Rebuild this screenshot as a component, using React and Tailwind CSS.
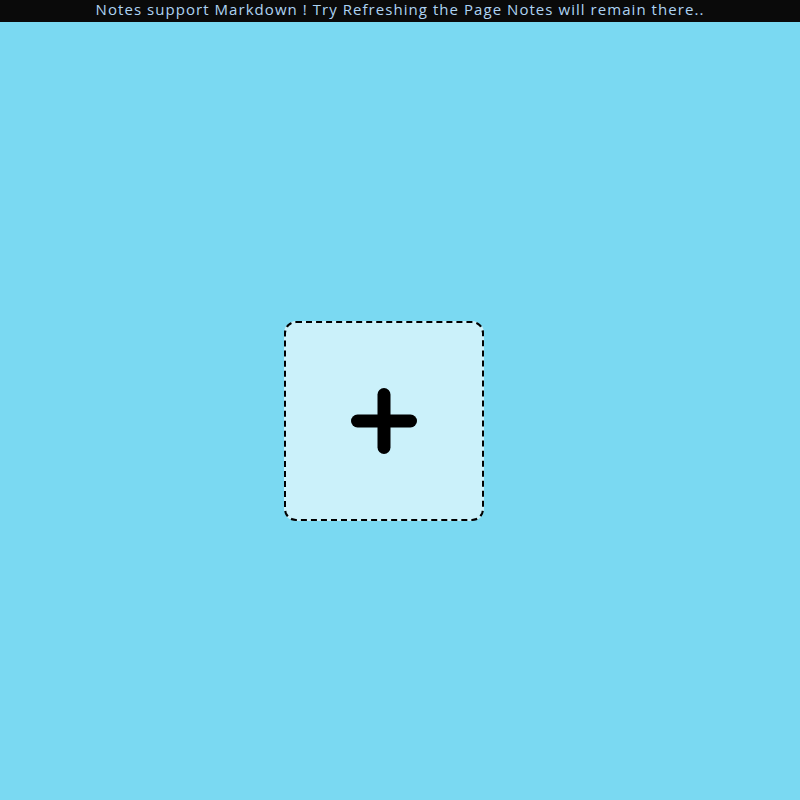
import React from 'react';

export default function App() {
    return (
        <div className="min-h-screen flex flex-col bg-[#7ad9f2]" style={{ fontFamily: '"Open Sans", "Liberation Sans", sans-serif' }}>
            <div className="h-[22px] bg-[#0a0a0a] flex items-center justify-center pb-[3px]">
                <p className="text-[15px] leading-none tracking-[1.05px] text-[#aed3f2] whitespace-nowrap">
                    Notes support Markdown ! Try Refreshing the Page Notes will remain there..
                </p>
            </div>
            <div className="flex-1 flex items-center justify-center pt-[20px] pr-[32px]">
                <button className="w-[200px] h-[200px] rounded-[12px] border-2 border-dashed border-black bg-[#cbf1fa] flex items-center justify-center">
                    <svg width="66" height="66" viewBox="0 0 66 66" fill="none" stroke="black" strokeWidth="13" strokeLinecap="round">
                        <line x1="33" y1="6.5" x2="33" y2="59.5" />
                        <line x1="6.5" y1="33" x2="59.5" y2="33" />
                    </svg>
                </button>
            </div>
        </div>
    );
}
